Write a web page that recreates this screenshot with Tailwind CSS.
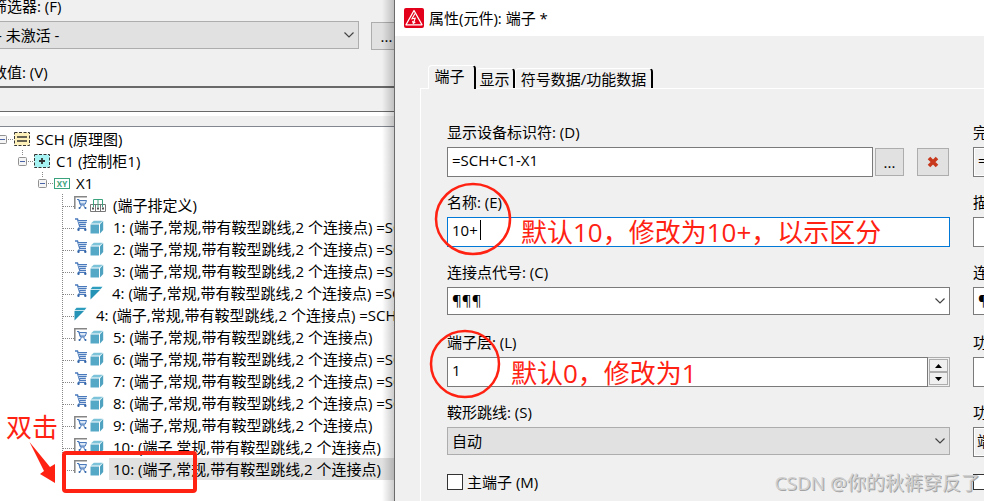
<!DOCTYPE html>
<html lang="zh-CN">
<head>
  <meta charset="UTF-8" />
  <meta name="viewport" content="width=device-width, initial-scale=1" />
  <title>属性(元件): 端子</title>
  <script src="https://cdn.jsdelivr.net/npm/@tailwindcss/browser@4"></script>
</head>
<body class="relative flex h-screen overflow-hidden bg-[#f0f0f0] font-['Open_Sans','Noto_Sans_CJK_SC',sans-serif] text-[15px] leading-[22px] text-black">

  <!-- Iconos -->
  <svg class="hidden">
    <symbol id="cart" viewBox="0 0 14 14">
      <path d="M1 1h2.500l2.300 7.500h6.200" fill="none" stroke="#4a7abb" stroke-width="1.400" />
      <path d="M4 2.200h9l-1.300 4.600H5.300z" fill="#c4d6ec" />
      <path d="M4 2.500h9M4.800 4.500h7.800M5.300 6.500h6.500" stroke="#4a7abb" />
      <path d="M5.500 9L4 10.500h8" fill="none" stroke="#4a7abb" />
      <circle cx="4.500" cy="11.800" r="1.200" fill="#3465a8" /><circle cx="11.300" cy="11.800" r="1.200" fill="#3465a8" />
    </symbol>
    <symbol id="cartbox" viewBox="0 0 14 14">
      <path d="M.8 13V.8h12.200" fill="none" stroke="#858585" stroke-width="1.500" />
      <path d="M3 3.500h1.700l1.800 5.500h4.500" fill="none" stroke="#4a7abb" stroke-width="1.200" />
      <path d="M5.200 4.500h7.300l-1.200 3.500H6.200z" fill="#dbe7f5" stroke="#4a7abb" />
      <path d="M5.500 12.500l2-3M11.500 12.500l-2-3" stroke="#4a7abb" />
      <circle cx="5.500" cy="12" r="1" fill="#3465a8" /><circle cx="11.500" cy="12" r="1" fill="#3465a8" />
    </symbol>
    <symbol id="cube" viewBox="0 0 14 14">
      <path d="M.5 4.500h8.500v9H.5z" fill="#55a9c6" />
      <path d="M.8 3.500l3-2.800h9l-3.300 2.800z" fill="#7cc3da" />
      <path d="M10 4.200L13.200 1v9L10 13.400z" fill="#4fa3c1" />
    </symbol>
    <symbol id="half" viewBox="0 0 14 14">
      <path d="M.5 3.200L2.500.8h10l-2 2.400z" fill="#2e9dbd" />
      <path d="M.5 4h9.500L.5 13.500z" fill="#2593b5" />
    </symbol>
    <symbol id="strip" viewBox="0 0 16 14">
      <path d="M.5 6.500h15v7H.5zM5.500 6.500v7M10.500 6.500v7" fill="#fff" stroke="#777" />
      <path d="M2 10.500h2M7 10.500h2M12 10.500h2" stroke="#555" stroke-width="2" />
      <path d="M3.500 9V1.500h9V9M8 1.500V9" fill="none" stroke="#3aa27c" />
    </symbol>
    <symbol id="minus" viewBox="0 0 9 9">
      <rect x=".5" y=".5" width="8" height="8" rx="1" fill="#f5f5f5" stroke="#919191" />
      <path d="M2 4.500h5" stroke="#4b63a7" />
    </symbol>
    <symbol id="chevron" viewBox="0 0 10 6">
      <path d="M.5.5L5 5 9.500.5" fill="none" stroke="#444" stroke-width="1.200" />
    </symbol>
  </svg>

  <!-- Navegador -->
  <section class="relative flex w-[394px] shrink-0 flex-col overflow-hidden whitespace-nowrap">
    <div class="-ml-2 flex h-[86px] flex-col">
      <label for="filtro" class="-mt-[5px] h-[26px]">筛选器: (F)</label>
      <div class="flex gap-3">
        <div class="relative flex-1">
          <select id="filtro" class="h-7 w-full appearance-none border border-[#adadad] bg-[#e1e1e1] px-1">
            <option>- 未激活 -</option>
          </select>
          <svg class="pointer-events-none absolute top-[11px] right-[5px] h-[6px] w-[10px]"><use href="#chevron" /></svg>
        </div>
        <button class="mt-px -mr-2 h-7 w-[31px] border border-[#adadad] bg-[#e1e1e1] text-center">...</button>
      </div>
      <label for="valor" class="mt-[11px]">数值: (V)</label>
    </div>
    <input id="valor" class="h-[26px] w-full shrink-0 border-t-2 border-b border-[#696969] bg-[#f0f0f0]" />
    <div class="h-[14px] shrink-0 border-t-4 border-white"></div>

    <!-- Árbol -->
    <div class="flex-1 border-t border-[#828790] bg-white pt-px">
      <div class="flex h-[22px] items-center">
        <svg class="-ml-[2px] h-[9px] w-[9px]"><use href="#minus" /></svg>
        <svg class="h-px w-[7px]"><path d="M1 .5h6" stroke="#888" stroke-dasharray="1 1" /></svg>
        <svg class="h-4 w-4" viewBox="0 0 16 16">
          <rect x=".5" y="1.500" width="15" height="13" fill="#fdf0b8" stroke="#333" stroke-dasharray="3 1.500" />
          <path d="M3 6h10M3 10h10" stroke="#333" stroke-width="1.500" />
        </svg>
        <span class="ml-[6px]">SCH (原理图)</span>
      </div>
      <div class="flex h-[22px] items-center pl-[18px]">
        <svg class="h-[22px] w-[9px]" viewBox="0 0 9 22"><path d="M4.500 0v6" stroke="#888" stroke-dasharray="1 1" /><use href="#minus" y="7" width="9" height="9" /></svg>
        <svg class="h-px w-[7px]"><path d="M1 .5h6" stroke="#888" stroke-dasharray="1 1" /></svg>
        <svg class="h-4 w-4" viewBox="0 0 16 16">
          <rect x=".5" y="1.500" width="15" height="13" fill="#a6f3f3" stroke="#333" stroke-dasharray="3 1.500" />
          <path d="M5 8h6M8 5v6" stroke="#333" stroke-width="1.800" />
        </svg>
        <span class="ml-[6px]">C1 (控制柜1)</span>
      </div>
      <div class="flex h-[22px] items-center pl-[38px]">
        <svg class="h-[22px] w-[9px]" viewBox="0 0 9 22"><path d="M4.500 0v6" stroke="#888" stroke-dasharray="1 1" /><use href="#minus" y="7" width="9" height="9" /></svg>
        <svg class="h-px w-[7px]"><path d="M1 .5h6" stroke="#888" stroke-dasharray="1 1" /></svg>
        <svg class="h-[11px] w-4" viewBox="0 0 16 11">
          <rect x=".5" y=".5" width="15" height="10" fill="#fff" stroke="#3aa27c" />
          <text x="8" y="8.500" text-anchor="middle" font-size="8" font-weight="700" fill="#3aa27c">XY</text>
        </svg>
        <span class="ml-[6px]">X1</span>
      </div>
      <div id="bornes" class="pl-[62px]"></div>
    </div>

    <!-- Sombra del diálogo -->
    <div class="pointer-events-none absolute inset-y-0 right-0 w-3 bg-linear-to-l from-black/20 to-transparent"></div>
  </section>

  <!-- Diálogo de propiedades -->
  <main class="flex min-w-0 flex-1 flex-col border-l border-[#6b6b6b]">
    <header class="flex h-9 shrink-0 items-center gap-[5px] bg-white pl-[9px]">
      <svg class="h-5 w-5" viewBox="0 0 20 20">
        <rect width="20" height="20" rx="2" fill="#e2001a" />
        <path d="M10 2.500L18 16.800H2z" fill="none" stroke="#fff" stroke-width="1.300" stroke-linejoin="round" />
        <path d="M11 5.500L8 10.800l3.200-.6L9.500 15M8.500 13l.8 2.300L11.300 14" fill="none" stroke="#fff" stroke-width="1.100" />
      </svg>
      <h1>属性(元件): 端子 *</h1>
    </header>

    <nav class="mt-[29px] flex h-[23px] shrink-0 items-end pl-[33px]">
      <button class="relative -mb-px h-6 w-[48px] rounded-t-sm border-t border-r-2 border-l border-t-white border-r-black border-l-white bg-[#f0f0f0] pr-1 pb-1 leading-5">端子</button>
      <button class="h-5 w-[39px] rounded-t-sm border-t border-r-2 border-t-white border-r-black leading-[18px]">显示</button>
      <button class="h-5 w-[138px] rounded-t-sm border-t border-r-2 border-l border-t-white border-r-black border-l-white leading-[18px]">符号数据/功能数据</button>
    </nav>

    <form class="ml-[25px] flex flex-1 gap-[23px] border-t border-l border-white pt-[30px] pl-[26px] whitespace-nowrap">
      <div class="min-w-0 flex-1">
        <div class="h-[70px]">
          <label for="bmk" class="block h-7 leading-[26px]">显示设备标识符: (D)</label>
          <div class="flex items-center">
            <input id="bmk" value="=SCH+C1-X1" class="h-[30px] min-w-0 flex-1 border border-[#7a7a7a] bg-white px-1 pb-1" />
            <button type="button" class="ml-[2px] h-7 w-[29px] border border-[#adadad] bg-[#e1e1e1]">...</button>
            <button type="button" aria-label="删除" class="mr-px ml-[13px] flex h-7 w-8 items-center justify-center border border-[#adadad] bg-[#e1e1e1]">
              <svg class="h-3 w-3" viewBox="0 0 12 12"><path d="M2 2l8 8M10 2l-8 8" stroke="#c8381d" stroke-width="3.600" /></svg>
            </button>
          </div>
        </div>
        <div class="h-[70px]">
          <label for="nombre" class="block h-7 leading-[26px]">名称: (E)</label>
          <div class="flex h-[30px] items-center border border-[#0078d7] bg-white pb-1">
            <input id="nombre" value="10+" class="w-8 pl-1 outline-none" />
            <span class="h-5 w-px bg-black"></span>
          </div>
        </div>
        <div class="h-[70px]">
          <label for="conexion" class="block h-7 leading-[26px]">连接点代号: (C)</label>
          <div class="relative">
            <select id="conexion" class="h-7 w-full appearance-none border border-[#7a7a7a] bg-white px-1 pb-[2px]">
              <option>¶¶¶</option>
            </select>
            <svg class="pointer-events-none absolute top-[11px] right-[5px] h-[6px] w-[10px]"><use href="#chevron" /></svg>
          </div>
        </div>
        <div class="h-[70px]">
          <label for="nivel" class="block h-7 leading-[26px]">端子层: (L)</label>
          <div class="flex">
            <input id="nivel" value="1" class="h-[30px] min-w-0 flex-1 border border-[#7a7a7a] bg-white px-1 pb-1" />
            <div class="flex w-[22px] flex-col border border-l-0 border-[#adadad] p-px">
              <button type="button" aria-label="增加" class="flex flex-1 items-center justify-center border border-[#adadad]">
                <svg class="h-1 w-[7px]" viewBox="0 0 7 4"><path d="M0 4L3.500 0 7 4z" /></svg>
              </button>
              <button type="button" aria-label="减少" class="flex flex-1 items-center justify-center border border-[#adadad]">
                <svg class="h-1 w-[7px]" viewBox="0 0 7 4"><path d="M0 0h7L3.500 4z" /></svg>
              </button>
            </div>
          </div>
        </div>
        <div class="h-[70px]">
          <label for="puente" class="block h-7 leading-[26px]">鞍形跳线: (S)</label>
          <div class="relative">
            <select id="puente" class="h-7 w-full appearance-none border border-[#adadad] bg-[#e1e1e1] px-1">
              <option>自动</option>
            </select>
            <svg class="pointer-events-none absolute top-[11px] right-[5px] h-[6px] w-[10px]"><use href="#chevron" /></svg>
          </div>
        </div>
        <label class="flex h-[26px] items-center gap-1">
          <input type="checkbox" class="h-4 w-4 appearance-none border border-[#333] bg-white" />
          主端子 (M)
        </label>
      </div>

      <!-- Segunda columna, cortada por el borde de la ventana -->
      <div class="w-[11px] shrink-0 overflow-hidden">
        <div class="h-[70px] w-40">
          <label for="completo" class="block h-7 leading-[26px]">完整设备标识符</label>
          <input id="completo" value="=SCH+C1-X1" readonly class="h-[30px] w-full border border-[#7a7a7a] bg-[#f0f0f0] px-1 pb-1 inset-ring inset-ring-white" />
        </div>
        <div class="h-[70px] w-40">
          <label for="descripcion" class="block h-7 leading-[26px]">描述</label>
          <input id="descripcion" class="h-[30px] w-full border border-[#7a7a7a] bg-white px-1" />
        </div>
        <div class="h-[70px] w-40">
          <label for="conexion2" class="block h-7 leading-[26px]">连接点描述</label>
          <select id="conexion2" class="h-7 w-full appearance-none border border-[#7a7a7a] bg-white px-1 pb-[2px]"><option>¶¶¶</option></select>
        </div>
        <div class="h-[70px] w-40">
          <label for="funcion" class="block h-7 leading-[26px]">功能文本</label>
          <input id="funcion" class="h-[30px] w-full border border-[#7a7a7a] bg-white px-1" />
        </div>
        <div class="h-[70px] w-40">
          <label for="definicion" class="block h-7 leading-[26px]">功能定义</label>
          <input id="definicion" value="端子" readonly class="h-[30px] w-full border border-[#7a7a7a] bg-[#f0f0f0] px-[3px] pb-1 inset-ring inset-ring-white" />
        </div>
        <div class="flex h-[26px] w-40 items-center">
          <input type="checkbox" aria-label="分配" class="h-4 w-4 appearance-none border border-[#333] bg-white" />
        </div>
      </div>
    </form>
  </main>

  <!-- Anotaciones -->
  <svg class="pointer-events-none absolute inset-0 h-full w-full" fill="none" stroke="#ff2213">
    <ellipse cx="473" cy="219" rx="37" ry="35" stroke-width="2.500" />
    <ellipse cx="465" cy="364" rx="34" ry="33" stroke-width="2.500" />
    <rect x="64" y="453" width="131" height="38" rx="2" stroke-width="4" />
    <path d="M29.500 442L44 471l-4 3 15 9V464l-5 3z" fill="#ff2213" stroke="none" />
  </svg>
  <div class="pointer-events-none absolute inset-0 text-[26px] leading-8 whitespace-nowrap text-[#ff2213]">
    <p class="absolute top-[411px] left-[6px]">双击</p>
    <p class="absolute top-[216px] left-[521px]">默认10，修改为10+，以示区分</p>
    <p class="absolute top-[357px] left-[511px]">默认0，修改为1</p>
  </div>
  <p class="pointer-events-none absolute right-1 bottom-[6px] text-[19px] leading-6 whitespace-nowrap text-[#d0d0d0] text-shadow-[1px_1px_0_#a3a3a3]">CSDN @你的秋裤穿反了</p>

  <script>
    const desc = "(端子,常规,带有鞍型跳线,2 个连接点)";
    const filas = [
      { iconos: ["cartbox", "strip"], texto: "(端子排定义)" },
      { iconos: ["cart", "cube"], texto: `1: ${desc} =SCH` },
      { iconos: ["cart", "cube"], texto: `2: ${desc} =SCH` },
      { iconos: ["cart", "cube"], texto: `3: ${desc} =SCH` },
      { iconos: ["cart", "half"], texto: `4: ${desc} =SCH` },
      { iconos: ["half"], texto: `4: ${desc} =SCH` },
      { iconos: ["cartbox", "cube"], texto: `5: ${desc}` },
      { iconos: ["cart", "cube"], texto: `6: ${desc} =SCH` },
      { iconos: ["cart", "cube"], texto: `7: ${desc} =SCH` },
      { iconos: ["cart", "cube"], texto: `8: ${desc} =SCH` },
      { iconos: ["cartbox", "cube"], texto: `9: ${desc}` },
      { iconos: ["cartbox", "cube"], texto: `10: ${desc}` },
      { iconos: ["cartbox", "cube"], texto: `10: ${desc}`, activo: true },
    ];

    const clases = {
      cart: "mr-[2px] mb-[2px] h-[14px] w-[14px]",
      cartbox: "mr-[2px] mb-[2px] h-[14px] w-[14px]",
      cube: "mr-[2px] h-[14px] w-[14px]",
      half: "mr-px h-[14px] w-[14px]",
      strip: "h-[14px] w-4",
    };

    document.getElementById("bornes").innerHTML = filas.map((fila, i) => {
      const alto = i === filas.length - 1 ? 12 : 22;
      const iconos = fila.iconos.map((icono) =>
        `<svg class="${clases[icono]}"><use href="#${icono}" /></svg>`).join("");
      return `
        <div class="flex h-[22px] items-center">
          <svg class="h-[22px] w-3 shrink-0"><path d="M.5 0v${alto}M1 12.500h11" stroke="#888" stroke-dasharray="1 1" /></svg>
          <span class="flex shrink-0 items-end pr-[3px] pb-[2px]">${iconos}</span>
          <span class="flex-1 pl-1 ${fila.activo ? "bg-[#e1e1e1]" : ""}">${fila.texto}</span>
        </div>`;
    }).join("");
  </script>

</body>
</html>
